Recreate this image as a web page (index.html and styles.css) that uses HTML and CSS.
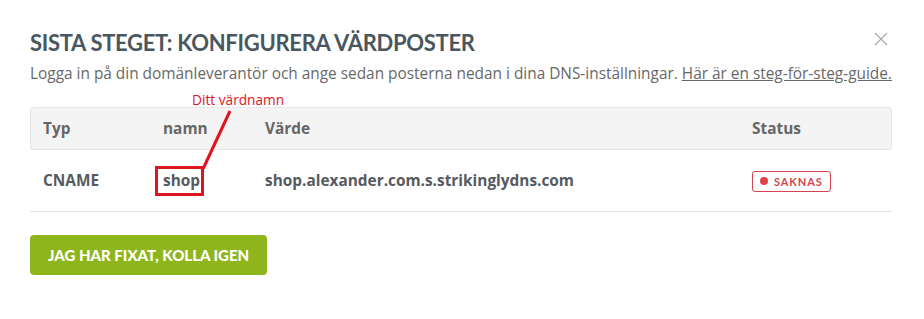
FILE: index.html
```html
<!DOCTYPE html>
<html>
    <head>
        <meta charset="UTF-8">
        <title>Konfigurera värdposter</title>
        <link rel="stylesheet" href="styles.css">
    </head>
    <body>
        <div class="modal">
            <button class="close" aria-label="Stäng">
                <svg width="14" height="14" viewBox="0 0 14 14"><path d="M1 1L13 13M13 1L1 13" stroke="#a9a9a9" stroke-width="1.2" fill="none"/></svg>
            </button>
            <h1 class="title">Sista steget: Konfigurera värdposter</h1>
            <p class="intro">Logga in på din domänleverantör och ange sedan posterna nedan i dina DNS-inställningar. <a href="#">Här är en steg-för-steg-guide.</a></p>

            <div class="records">
                <div class="row head">
                    <div>Typ</div>
                    <div>namn</div>
                    <div>Värde</div>
                    <div>Status</div>
                </div>
                <div class="row">
                    <div>CNAME</div>
                    <div><span class="marked">shop</span></div>
                    <div>shop.alexander.com.s.strikinglydns.com</div>
                    <div><span class="badge"><i class="dot"></i>Saknas</span></div>
                </div>

                <!-- anteckning ovanpå tabellen -->
                <span class="note">Ditt värdnamn</span>
                <svg class="pointer" width="40" height="70" viewBox="0 0 40 70"><path d="M35 4L8 62" stroke="#e0141e" stroke-width="3" fill="none"/></svg>
            </div>

            <button class="recheck">Jag har fixat, kolla igen</button>
        </div>
    </body>
</html>
```

FILE: styles.css
```css
* {
    box-sizing: border-box;
}

body {
    margin: 0;
    background: #fff;
    font-family: 'Open Sans', sans-serif;
    color: #555;
}

.modal {
    position: relative;
    padding: 30px 32px 0 30px;
}

.close {
    position: absolute;
    top: 32px;
    right: 36px;
    background: none;
    border: 0;
    padding: 0;
    cursor: pointer;
}

.title {
    margin: 0;
    font-family: Lato, sans-serif;
    font-weight: 700;
    font-size: 22px;
    line-height: 26px;
    text-transform: uppercase;
    color: #4a575f;
    letter-spacing: -0.3px;
}

.intro {
    margin: 7px 0 0;
    font-size: 15.4px;
    line-height: 22px;
    color: #686868;
}

.intro a {
    color: #686868;
}

.records {
    position: relative;
    margin-top: 22px;
}

.row {
    display: grid;
    grid-template-columns: 120px 102px 487px 1fr;
    align-items: center;
    padding-left: 13px;
    height: 62px;
    border-bottom: 1px solid #e3e3e3;
    font-size: 15.4px;
    font-weight: 700;
    color: #555b60;
}

.row.head {
    height: 43px;
    background: #f4f4f4;
    border: 1px solid #e6e6e6;
    border-radius: 3px;
    color: #666;
    padding-left: 12px;
}

.marked {
    display: inline-block;
    margin-left: -8px;
    padding: 2px 1px 2px 5px;
    line-height: 20px;
    border: 3px solid #e0141e;
}

.badge {
    display: inline-flex;
    align-items: center;
    height: 21px;
    padding: 0 7px 0 7px;
    border: 1px solid #d5434e;
    border-radius: 3px;
    color: #d5434e;
    font-family: Lato, sans-serif;
    font-size: 11px;
    font-weight: 700;
    letter-spacing: 0.9px;
    text-transform: uppercase;
}

.dot {
    width: 8px;
    height: 8px;
    border-radius: 50%;
    background: #e0414b;
    margin-right: 6px;
}

.note {
    position: absolute;
    left: 162px;
    top: -17px;
    font-size: 13.7px;
    color: #e0141e;
}

.pointer {
    position: absolute;
    left: 165px;
    top: 0;
}

.recheck {
    margin-top: 23px;
    height: 40px;
    padding: 0 18px;
    background: #8fb51d;
    border: 0;
    border-radius: 4px;
    color: #fff;
    font-family: Lato, sans-serif;
    font-weight: 900;
    font-size: 15px;
    text-transform: uppercase;
    cursor: pointer;
}
```
